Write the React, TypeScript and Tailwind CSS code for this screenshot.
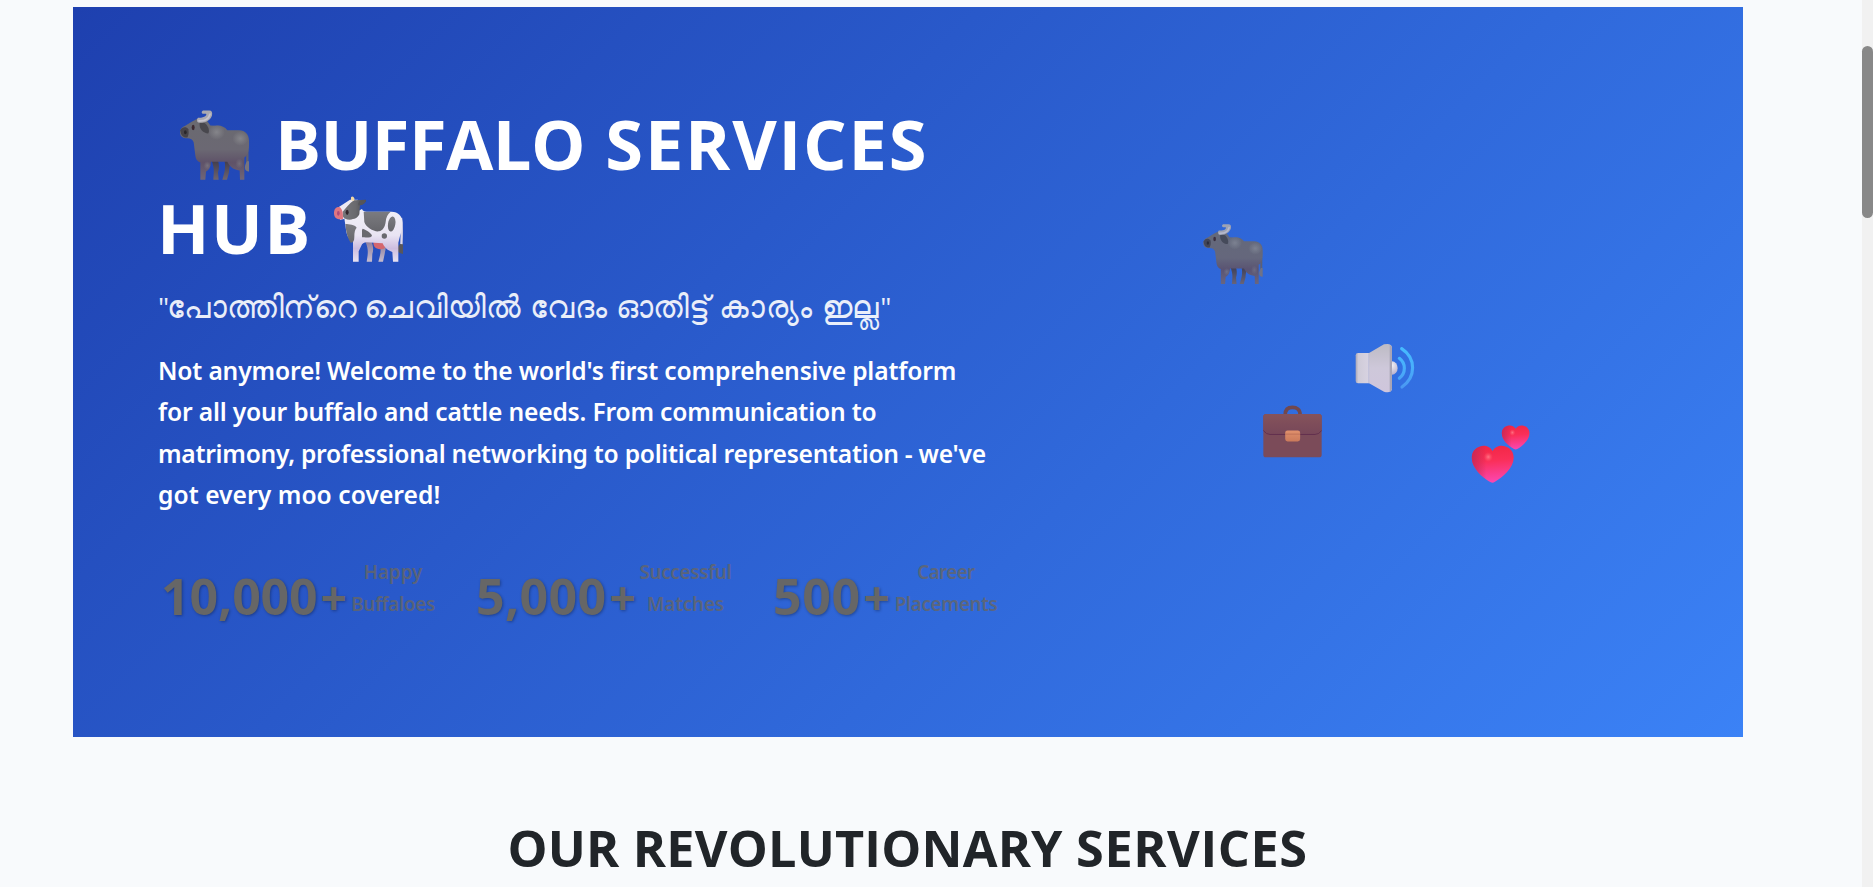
function Buffalo({ id, className }: { id: string; className: string }) {
  return (
    <svg viewBox="90 60 207 209" className={className} aria-hidden="true">
      <defs>
        <linearGradient id={`${id}-body`} x1="0" y1="0" x2="0" y2="1">
          <stop offset="0" stopColor="#6a6a70" />
          <stop offset="0.5" stopColor="#6b6873" />
          <stop offset="0.72" stopColor="#5f5268" />
          <stop offset="1" stopColor="#6f6678" />
        </linearGradient>
        <radialGradient id={`${id}-glow`}>
          <stop offset="0" stopColor="#85858a" />
          <stop offset="1" stopColor="#85858a" stopOpacity="0" />
        </radialGradient>
        <linearGradient id={`${id}-leg`} x1="0" y1="0" x2="0" y2="1">
          <stop offset="0" stopColor="#3f3a48" />
          <stop offset="1" stopColor="#6d6470" />
        </linearGradient>
      </defs>
      <path d="M184 208h19c5 15 5 28 1 38l2 23h-16c1-23 5-30-6-61Z" fill={`url(#${id}-leg)`} />
      <path d="M223 208h18c0 18-4 27-4 38l-6 23h-14c7-25 11-36 6-61Z" fill={`url(#${id}-leg)`} />
      <path d="M292 180v42" stroke="#63606b" strokeWidth="7" fill="none" />
      <path d="M291 213c-6 10-9 21-3 28 4 3 9 3 9 3v-31Z" fill="#77747e" />
      <path
        d="M142 86 125 95 107 106C96 110 90 117 90 126c0 12 8 18 22 18 10 0 16 4 19 12l5 40c1 11 6 18 15 21v52h15l2-25c8-3 14-12 15-29h49c6 12 15 24 37 26l1 28h13V202c9-6 14-17 14-37v-13c0-20-11-31-30-32h-35c-9-12-24-16-36-13l-15-1-11-16Z"
        fill={`url(#${id}-body)`}
      />
      <ellipse cx="200" cy="126" rx="25" ry="23" fill={`url(#${id}-glow)`} />
      <ellipse cx="271" cy="145" rx="24" ry="22" fill={`url(#${id}-glow)`} />
      <ellipse cx="172" cy="226" rx="11" ry="13" fill={`url(#${id}-glow)`} opacity="0.6" />
      <ellipse cx="268" cy="220" rx="12" ry="15" fill={`url(#${id}-glow)`} opacity="0.5" />
      <path d="M91 120c7-11 18-11 24-3 2 10 1 18-3 25-12 1-20-6-21-22Z" fill="#464349" />
      <ellipse cx="106" cy="126" rx="4" ry="6" fill="#29262b" />
      <ellipse cx="129.500" cy="112" rx="4.500" ry="8" fill="#3c2a31" />
      <path d="M149 98c9-6 23 3 27 18 2 9 0 13-2 14-13-1-28-12-25-32Z" fill="#48474d" />
      <path
        d="M144 83c-5 5-4 14 3 15 20 1 35-8 39-22 2-10-1-15-8-15h-19c-6 3-4 9 0 10h9c4 4-4 13-24 12Z"
        fill="#aaa9b0"
      />
      <path d="M147 92c16 1 29-6 33-20" stroke="#c6c3cd" strokeWidth="5" strokeLinecap="round" fill="none" />
    </svg>
  );
}

function Cow({ className }: { className: string }) {
  return (
    <svg viewBox="552 320 207 196" className={className} aria-hidden="true">
      <defs>
        <linearGradient id="cow-body" x1="0" y1="0" x2="0" y2="1">
          <stop offset="0" stopColor="#f1eff6" />
          <stop offset="0.5" stopColor="#e9e4f3" />
          <stop offset="0.75" stopColor="#cdbde0" />
          <stop offset="1" stopColor="#e8e2f1" />
        </linearGradient>
        <linearGradient id="cow-leg" x1="0" y1="0" x2="0" y2="1">
          <stop offset="0" stopColor="#8f809e" />
          <stop offset="1" stopColor="#c6bccf" />
        </linearGradient>
        <linearGradient id="cow-patch" x1="0" y1="0" x2="0" y2="1">
          <stop offset="0" stopColor="#7b7b80" />
          <stop offset="1" stopColor="#66666b" />
        </linearGradient>
        <linearGradient id="cow-head" x1="0" y1="0" x2="1" y2="0">
          <stop offset="0" stopColor="#77777c" />
          <stop offset="0.55" stopColor="#6a6a6e" />
          <stop offset="1" stopColor="#4a4a4f" />
        </linearGradient>
      </defs>
      <path d="M647 457h18c5 14 6 25 2 36l-1 23h-16c4-26 6-34-3-59Z" fill="url(#cow-leg)" />
      <path d="M690 465h18c0 12-3 20-4 28l-5 23h-14c6-22 9-32 5-51Z" fill="url(#cow-leg)" />
      <path d="M670 458c0 12 6 20 20 21 12 0 17-5 18-13l-10-12Z" fill="#d4666f" />
      <path d="M753 385c4 25 2 55 1 84" stroke="#ddd8e8" strokeWidth="7" fill="none" />
      <path d="M750 463c-9 10-10 22-1 27l10 3v-29Z" fill="#57565c" />
      <path
        d="M636 358c2 6 7 8 14 8h75c20 1 33 12 32 35-1 15-2 27-7 38l-5 20v57h-16l-2-29c-14-5-23-12-29-26l-48-3c-8 0-14 4-16 10l-8 17v31h-17v-60c-13-7-19-20-21-36l-5-34Z"
        fill="url(#cow-body)"
      />
      <path d="M641 366h81c-9 7-14 17-15 31-2 15-9 26-20 28-14 3-40-13-44-28Z" fill="url(#cow-patch)" />
      <ellipse cx="725" cy="403" rx="11" ry="23" transform="rotate(9 725 403)" fill="url(#cow-patch)" />
      <path d="M586 403c12 1 28 1 34 11-5 5-7 14-7 27 0 12-3 18-11 18-10-14-14-35-16-56Z" fill="url(#cow-patch)" />
      <path d="M638 417c11 4 24 11 28 21-1 5-11 6-30 5v-22Z" fill="#6a696f" />
      <circle cx="703" cy="439" r="8" fill="#6a696f" />
      <path d="M562 355 600 330l24 0-7 10-35 48-12 2Z" fill="#eeeaf3" />
      <path d="M578 366c10-10 20-26 34-34l36-2c1 8-6 13-18 17l-2 27c-5 11-14 15-29 16-11 0-17-3-21-10Z" fill="url(#cow-head)" />
      <path d="M625 347c-1-8 2-12 8-15l15-1c-1 9-8 14-18 16Z" fill="#55555a" />
      <ellipse cx="591.500" cy="368" rx="4.500" ry="8" fill="#33262d" />
      <path d="M552 367c1-11 8-16 16-15 8 4 11 14 11 36-17 3-28-2-27-21Z" fill="#df7680" />
      <ellipse cx="565" cy="371" rx="4" ry="7" fill="#b04a78" />
      <path d="M603 331v-8c3-5 9-3 11 6l-4 5Z" fill="#f3d9a5" />
    </svg>
  );
}

function Speaker({ className }: { className: string }) {
  return (
    <svg viewBox="345 40 180 150" className={className} aria-hidden="true">
      <defs>
        <linearGradient id="sp-back" x1="0" y1="0" x2="1" y2="0">
          <stop offset="0" stopColor="#aaa7b6" />
          <stop offset="0.2" stopColor="#cfcbd8" />
          <stop offset="1" stopColor="#d8d3e2" />
        </linearGradient>
        <linearGradient id="sp-cone" x1="0" y1="0" x2="0" y2="1">
          <stop offset="0" stopColor="#bdbbc4" />
          <stop offset="0.5" stopColor="#cec8da" />
          <stop offset="1" stopColor="#cfc6dc" />
        </linearGradient>
        <linearGradient id="sp-wave" gradientUnits="userSpaceOnUse" x1="0" y1="50" x2="0" y2="178">
          <stop offset="0" stopColor="#46bcff" />
          <stop offset="0.5" stopColor="#49aefb" />
          <stop offset="1" stopColor="#4a96f2" />
        </linearGradient>
        <radialGradient id="sp-dot" cx="0.5" cy="0.3" r="0.7">
          <stop offset="0" stopColor="#f1eff4" />
          <stop offset="1" stopColor="#b9b0cc" />
        </radialGradient>
      </defs>
      <ellipse cx="456" cy="115" rx="17" ry="20" fill="url(#sp-dot)" />
      <path d="M388 70h-34q-7 0-7 7v77q0 7 7 7h34Z" fill="url(#sp-back)" />
      <path d="M386 71 432 44q23-5 24 10v123q-3 15-24 9l-46-26Z" fill="url(#sp-cone)" />
      <path d="M449 46q7 3 7 10v120q-1 8-7 11Z" fill="#aaa5b6" />
      <path d="M386 71v89" stroke="#aeb2d5" strokeWidth="1.500" />
      <path
        d="M478 86c20 15 20 44 0 60M485 57c44 29 43 86 1 115"
        fill="none"
        stroke="url(#sp-wave)"
        strokeWidth="9.500"
        strokeLinecap="round"
      />
    </svg>
  );
}

function Briefcase({ className }: { className: string }) {
  return (
    <svg viewBox="68 224 178 158" className={className} aria-hidden="true">
      <defs>
        <linearGradient id="bc-top" x1="0" y1="0" x2="0" y2="1">
          <stop offset="0" stopColor="#85535b" />
          <stop offset="1" stopColor="#774759" />
        </linearGradient>
        <linearGradient id="bc-lock" x1="0" y1="0" x2="0" y2="1">
          <stop offset="0" stopColor="#e0906c" />
          <stop offset="1" stopColor="#cb7a5b" />
        </linearGradient>
      </defs>
      <path d="M135 252c0-16 9-22 22-22s23 7 23 22" fill="none" stroke="#71484f" strokeWidth="11" />
      <rect x="69" y="250" width="176" height="131" rx="8" fill="#7b4b59" />
      <path d="M69 301V258q0-8 8-8h160q8 0 8 8v43q-8 10-20 10H88q-10 0-19-10Z" fill="url(#bc-top)" />
      <path d="M69 300q9 12 20 12h136q12 0 20-12" fill="none" stroke="#63304f" strokeWidth="3" />
      <rect x="135" y="300" width="45" height="33" rx="7" fill="url(#bc-lock)" />
      <path d="M135 311h45" stroke="#b56554" strokeWidth="2" />
    </svg>
  );
}

const bigHeart =
  "M758 363C749 347 732 345 720 349c-15 4-25 17-25 34 0 33 34 61 56 74q7 4 13 0c24-15 58-43 58-74 0-17-10-30-25-34-13-4-30-2-39 14Z";
const smallHeart =
  "M828 295c-6-10-16-11-24-9-11 3-18 11-18 23 0 21 21 39 37 48q5 3 10 0c15-10 37-27 37-48 0-12-8-20-18-23-8-2-18-1-24 9Z";

function Hearts({ className }: { className: string }) {
  return (
    <svg viewBox="694 284 176 176" className={className} aria-hidden="true">
      <defs>
        <linearGradient id="ht-fill" x1="0.45" y1="0" x2="0.55" y2="1">
          <stop offset="0" stopColor="#f22745" />
          <stop offset="0.4" stopColor="#fa2f58" />
          <stop offset="1" stopColor="#fb47b4" />
        </linearGradient>
        <radialGradient id="ht-shine">
          <stop offset="0" stopColor="#ff7384" />
          <stop offset="1" stopColor="#ff5068" stopOpacity="0" />
        </radialGradient>
        <linearGradient id="ht-edge" x1="0" y1="0" x2="1" y2="0">
          <stop offset="0" stopColor="#c02857" stopOpacity="0.8" />
          <stop offset="0.35" stopColor="#c02857" stopOpacity="0" />
        </linearGradient>
      </defs>
      <path d={bigHeart} fill="url(#ht-fill)" />
      <path d={bigHeart} fill="url(#ht-edge)" />
      <ellipse cx="745" cy="381" rx="14" ry="15" fill="url(#ht-shine)" />
      <path d={smallHeart} fill="url(#ht-fill)" />
      <path d={smallHeart} fill="url(#ht-edge)" />
      <ellipse cx="818" cy="307" rx="9" ry="10" fill="url(#ht-shine)" />
    </svg>
  );
}

const numberStyle =
  "block pl-[3px] text-[50px] font-bold leading-[80px] [text-shadow:1px_1px_3px_rgba(0,0,0,0.3)]";
const plusStyle = "ml-[3px] text-[46px] leading-none";
const labelStyle =
  "flex flex-col items-center whitespace-nowrap font-['Noto_Sans','Open_Sans',sans-serif] text-[18.8px] font-semibold leading-8 opacity-80";

export default function App() {
  return (
    <div className="flex h-[887px] w-full overflow-hidden bg-[#f8fafc] font-['Open_Sans','Noto_Sans',sans-serif]">
      <main className="flex-1 pl-[73px] pt-[7px]">
        <section className="relative h-[730px] w-[1670px] bg-[linear-gradient(135deg,#1e40af_0%,#3b82f6_100%)] pl-[85px] pt-[94px] text-white">
          <h1 className="whitespace-nowrap text-[68.6px] font-bold leading-[86px]">
            <span className="flex h-[84px] items-start">
              <Buffalo id="title" className="ml-[22px] mt-[9px] h-[70px] w-[69px] shrink-0" />
              <span className="ml-[26px]">
                <span className="tracking-[-0.55px]">BUFFALO </span>
                <span className="ml-[3px] tracking-[1.8px]">SERVICES</span>
              </span>
            </span>
            <span className="flex h-[84px] items-start">
              <span className="-ml-px w-[177px] tracking-[1.5px]">HUB</span>
              <Cow className="mt-[11px] h-[66px] w-[69px] shrink-0" />
            </span>
          </h1>

          <p className="mt-[10px] h-[54px] whitespace-nowrap text-[31px] font-light leading-[54px] opacity-90">
            <span className="-mr-[2px] text-[28px] font-normal">"</span>
            <span className="tracking-[-0.6px]">പോത്തിന്‌റെ </span>
            <span className="tracking-[0.4px]">ചെവിയിൽ വേദം ഓതിട്ട് </span>
            <span className="tracking-[0.8px]">കാര്യം ഇല്ല</span>
            <span className="text-[28px] font-normal">"</span>
          </p>

          <p className="mt-[17px] flex h-[166px] flex-col whitespace-nowrap font-['Noto_Sans','Open_Sans',sans-serif] text-[24.6px] font-semibold leading-[41.3px]">
            <span className="tracking-[-0.165px]">Not anymore! Welcome to the world's first comprehensive platform</span>
            <span className="tracking-[-0.175px]">for all your buffalo and cattle needs. From communication to</span>
            <span className="tracking-[-0.265px]">matrimony, professional networking to political representation - we've</span>
            <span className="tracking-[0.05px]">got every moo covered!</span>
          </p>

          <div className="mt-[40px] flex gap-[38px] text-[#666]">
            <div className="flex">
              <span className={`${numberStyle} w-[193px] tracking-[-0.1px]`}>
                10,000<span className={plusStyle}>+</span>
              </span>
              <span className={`${labelStyle} w-[84px]`}>
                <span>Happy</span>
                <span className="tracking-[-0.3px]">Buffaloes</span>
              </span>
            </div>
            <div className="flex">
              <span className={`${numberStyle} w-[166px] tracking-[0.35px]`}>
                5,000<span className={plusStyle}>+</span>
              </span>
              <span className={`${labelStyle} w-[93px]`}>
                <span className="tracking-[-0.28px]">Successful</span>
                <span className="tracking-[-0.12px]">Matches</span>
              </span>
            </div>
            <div className="flex">
              <span className={`${numberStyle} w-[125px] tracking-[0.6px]`}>
                500<span className={plusStyle}>+</span>
              </span>
              <span className={`${labelStyle} w-[102px]`}>
                <span className="tracking-[-0.58px]">Career</span>
                <span className="tracking-[-0.34px]">Placements</span>
              </span>
            </div>
          </div>

          <Buffalo id="float" className="absolute left-[1130px] top-[217px] h-[60px] w-[60px] opacity-90" />
          <Speaker className="absolute left-[1282px] top-[336px] h-[50px] w-[60px]" />
          <Briefcase className="absolute left-[1190px] top-[397.5px] h-[53px] w-[59px]" />
          <Hearts className="absolute left-[1398px] top-[418px] h-[58px] w-[59px]" />
        </section>

        <h2 className="mt-[81px] whitespace-nowrap pl-[434.5px] text-[50.4px] font-bold leading-[60px] text-[#212529]">
          <span className="tracking-[0.2px]">OUR REVOLUTIONARY </span>
          <span className="tracking-[0.6px]">SERVICES</span>
        </h2>
      </main>

      <div className="w-[11px] bg-[#f1f1f1] pt-[46px]">
        <div className="h-[172px] rounded-full bg-[#888]" />
      </div>
    </div>
  );
}
